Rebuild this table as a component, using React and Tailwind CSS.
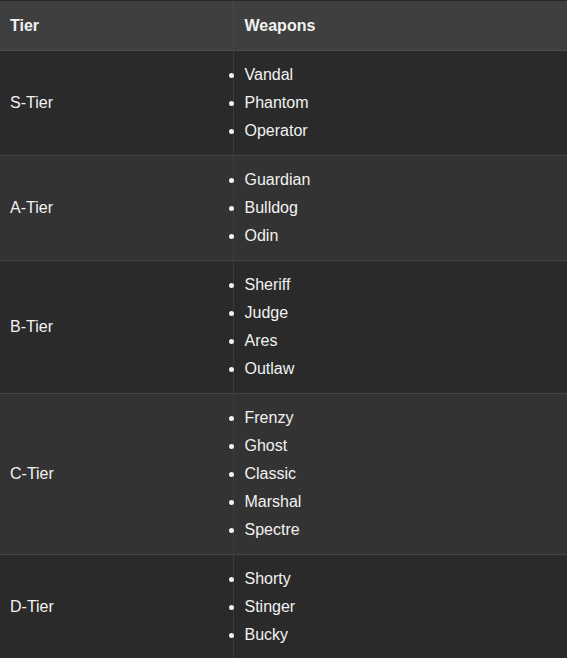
import React from "react";

const tiers = [
  { tier: "S-Tier", weapons: ["Vandal", "Phantom", "Operator"] },
  { tier: "A-Tier", weapons: ["Guardian", "Bulldog", "Odin"] },
  { tier: "B-Tier", weapons: ["Sheriff", "Judge", "Ares", "Outlaw"] },
  { tier: "C-Tier", weapons: ["Frenzy", "Ghost", "Classic", "Marshal", "Spectre"] },
  { tier: "D-Tier", weapons: ["Shorty", "Stinger", "Bucky"] },
];

const App = () => {
  return (
    <div
      className="min-h-screen bg-[#2a2a2a] text-[#f2f2f2]"
      style={{ fontFamily: '"Liberation Sans", Arial, sans-serif' }}
    >
      <table className="w-full border-collapse border-t border-[#22252b] text-[16px]">
        <thead>
          <tr className="bg-[#3f3f3f] border-b border-[#4a4a4a]">
            <th className="w-[233px] h-[50px] px-[10px] pt-[1px] text-left font-bold border-r border-[#474747]">
              Tier
            </th>
            <th className="h-[50px] pl-[11px] pt-[1px] text-left font-bold">Weapons</th>
          </tr>
        </thead>
        <tbody>
          {tiers.map((row, idx) => (
            <tr
              key={row.tier}
              className={`border-b border-[#444444] ${
                idx % 2 === 0 ? "bg-[#2a2a2a]" : "bg-[#333333]"
              }`}
            >
              <td className="w-[233px] px-[10px] align-middle border-r border-[#3c3c3c]">
                {row.tier}
              </td>
              <td className="py-[10px] pl-0">
                <ul className="list-disc pl-[11px] m-0">
                  {row.weapons.map((w) => (
                    <li key={w} className="leading-[28px]">
                      {w}
                    </li>
                  ))}
                </ul>
              </td>
            </tr>
          ))}
        </tbody>
      </table>
    </div>
  );
};

export default App;
